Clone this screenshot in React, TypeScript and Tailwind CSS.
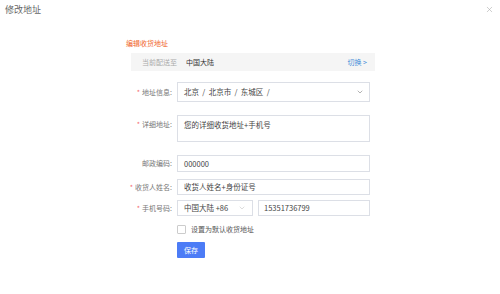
import { ChevronDown, X } from 'lucide-react';

const font = { fontFamily: '"Noto Sans CJK SC", "Noto Sans", sans-serif' };

function Label({ text, required }: { text: string; required?: boolean }) {
  return (
    <div className="flex w-[41px] shrink-0 justify-end text-[7px] leading-none text-[#777]">
      {required ? <span className="mr-[2px] text-[#f56c6c]">*</span> : null}
      <span className="whitespace-nowrap">{text}</span>
    </div>
  );
}

export default function App() {
  return (
    <div className="relative h-[294px] w-[500px] bg-white text-[#444]" style={font}>
      {/* header */}
      <div className="flex items-center justify-between pl-[5px] pr-[6px] pt-[4px]">
        <span className="text-[9px] leading-[11px] text-[#666]">修改地址</span>
        <X className="h-[9px] w-[9px] text-[#aaa]" strokeWidth={1.5} />
      </div>

      <div className="ml-[126px] mt-[24px] w-[249px]">
        <div className="text-[7px] leading-[9px] text-[#f0652a]">编辑收货地址</div>

        <div className="ml-[5px] mt-[5px] flex h-[18px] items-center bg-[#f5f5f5] pl-[11px] pr-[8px] text-[7px]">
          <span className="text-[#aaa]">当前配送至</span>
          <span className="ml-[9px] text-[#333]">中国大陆</span>
          <span className="ml-auto text-[#3f8cd8]">切换 &gt;</span>
        </div>

        <div className="ml-[5px] mt-[11px] flex flex-col">
          <div className="flex items-center gap-[5px]">
            <Label text="地址信息:" required />
            <div className="flex h-[20px] w-[193px] items-center border border-[#dcdfe6] pl-[6px] pr-[5px] text-[7.5px]">
              <span className="whitespace-pre">北京  /  北京市  /  东城区  /</span>
              <ChevronDown className="ml-auto h-[8px] w-[8px] text-[#666]" strokeWidth={1.5} />
            </div>
          </div>

          <div className="mt-[13px] flex items-start gap-[5px]">
            <div className="pt-[6px]">
              <Label text="详细地址:" required />
            </div>
            <div className="h-[27px] w-[193px] border border-[#dcdfe6] pl-[6px] pt-[5px] text-[7.5px] leading-none">
              您的详细收货地址+手机号
            </div>
          </div>

          <div className="mt-[13px] flex items-center gap-[5px]">
            <Label text="邮政编码:" />
            <div className="flex h-[17px] w-[193px] items-center border border-[#dcdfe6] pl-[6px] text-[7.5px]">
              000000
            </div>
          </div>

          <div className="mt-[7px] flex items-center gap-[5px]">
            <Label text="收货人姓名:" required />
            <div className="flex h-[16px] w-[193px] items-center border border-[#dcdfe6] pl-[6px] text-[7.5px]">
              收货人姓名+身份证号
            </div>
          </div>

          <div className="mt-[5px] flex items-center gap-[5px]">
            <Label text="手机号码:" required />
            <div className="flex w-[193px] gap-[5px]">
              <div className="flex h-[16px] w-[76px] items-center border border-[#dcdfe6] pl-[6px] pr-[6px] text-[7.5px]">
                <span>中国大陆 +86</span>
                <ChevronDown className="ml-auto h-[8px] w-[8px] text-[#aaa]" strokeWidth={1.2} />
              </div>
              <div className="flex h-[16px] flex-1 items-center border border-[#dcdfe6] pl-[5px] text-[7.5px]">
                15351736799
              </div>
            </div>
          </div>

          <div className="ml-[46px] mt-[9px] flex items-center gap-[5px]">
            <div className="h-[9px] w-[9px] rounded-[1px] border border-[#ccc] bg-white" />
            <span className="text-[7px] leading-none text-[#555]">设置为默认收货地址</span>
          </div>

          <div className="ml-[46px] mt-[8px]">
            <div className="flex h-[16px] w-[28px] items-center justify-center rounded-[1px] bg-[#4c7cf6] text-[7px] text-white">
              保存
            </div>
          </div>
        </div>
      </div>
    </div>
  );
}
